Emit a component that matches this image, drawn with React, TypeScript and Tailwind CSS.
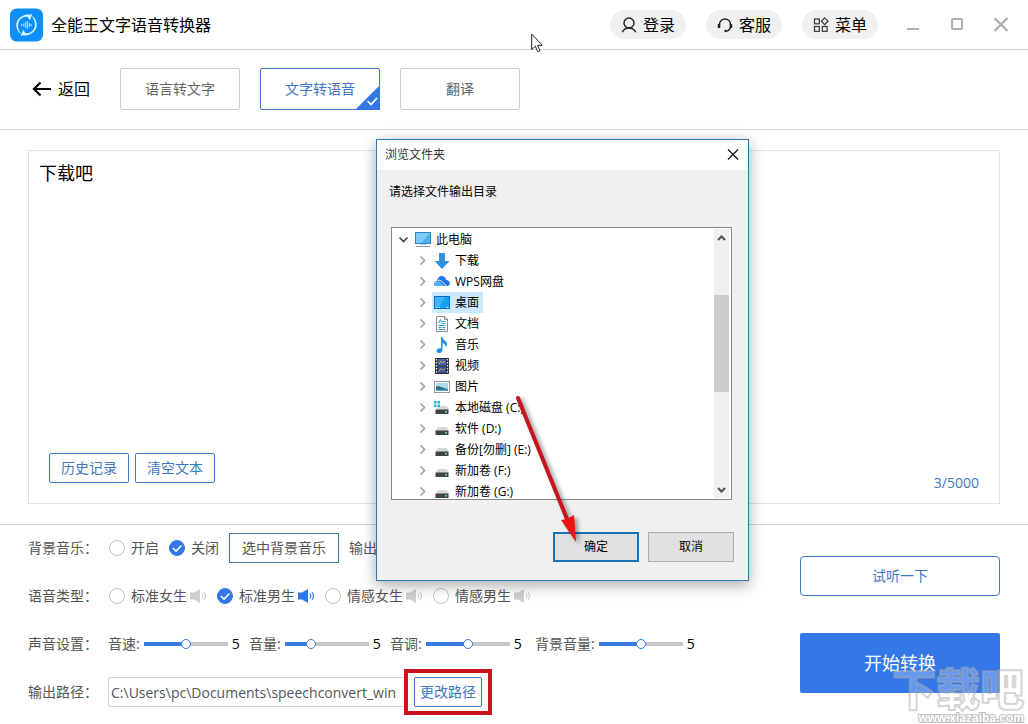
import { useState } from 'react';
import type { ReactNode } from 'react';

interface RadioOptionProps {
  name: string;
  label: string;
  checked: boolean;
  onChange: () => void;
}

interface TreeNode {
  label: string;
  icon: ReactNode;
}

const TABS = ['语言转文字', '文字转语音', '翻译'];
const VOICES = ['标准女生', '标准男生', '情感女生', '情感男生'];

const SLIDERS = [
  { id: 'speed', label: '音速:', value: 50 },
  { id: 'volume', label: '音量:', value: 29 },
  { id: 'pitch', label: '音调:', value: 50 },
  { id: 'bg-volume', label: '背景音量:', value: 50 },
];

/* ---------- icons ---------- */

function LogoIcon() {
  return (
    <svg viewBox="0 0 34 34" className="h-[34px] w-[33px] shrink-0">
      <rect width="34" height="34" rx="7" fill="#0c8ffb" />
      <path
        d="M12 26.500C5 23 4.500 12.500 11.500 8.500 15 6.300 18.500 6 21 6.500L23 5.500 20.500 12 18 8.500C14 8 11 10 9.500 12.500 7 17 8.500 22.500 12 26.500z"
        fill="#d9f6ff"
      />
      <path
        d="M22 7.500C29 11 29.500 21.500 22.500 25.500 19 27.700 15.500 28 13 27.500L11 28.500 13.500 22 16 25.500C20 26 23 24 24.500 21.500 27 17 25.500 11.500 22 7.500z"
        fill="#d9f6ff"
      />
      <path
        d="M12 16v2M14 15.500v3M16 14v6M18 13v8M20 15v4M22 16v2"
        stroke="#8edcff"
        strokeWidth="1.300"
      />
    </svg>
  );
}

function UserIcon() {
  return (
    <svg viewBox="0 0 16 16" className="h-4 w-4" fill="none" stroke="#222" strokeWidth="1.400">
      <circle cx="8" cy="6" r="5" />
      <path d="M1.200 15.300C2.500 12.500 5 11 8 11s5.500 1.500 6.800 4.300" />
    </svg>
  );
}

function HeadsetIcon() {
  return (
    <svg viewBox="0 0 16 16" className="h-4 w-4" fill="none" stroke="#222" strokeWidth="1.400">
      <path d="M2.500 9V7.500a5.500 5.500 0 0 1 11 0V9c0 3-1.500 4.800-4.500 5.200" />
      <path d="M2 7v4M14 7v4" strokeWidth="2.400" />
      <circle cx="8.500" cy="14" r="1.200" fill="#222" stroke="none" />
    </svg>
  );
}

function MenuIcon() {
  return (
    <svg viewBox="0 0 16 16" className="h-4 w-4" fill="none" stroke="#333" strokeWidth="1.200">
      <rect x="1.500" y="2" width="4.800" height="4.800" />
      <rect x="1.500" y="9.500" width="4.800" height="4.800" />
      <rect x="9.300" y="9.500" width="4.800" height="4.800" />
      <path d="M11.700.8 15 4.200l-3.300 3.400-3.300-3.400z" />
    </svg>
  );
}

function SpeakerIcon({ active }: { active: boolean }) {
  return (
    <svg
      viewBox="0 0 18 16"
      className={`h-4 w-[18px] ${active ? 'text-[#2f76e0]' : 'text-[#cfcfcf]'}`}
    >
      <path d="M1 4.500h4L11 1v14l-6-3.500H1z" fill="currentColor" />
      <path
        d="M13 5.500c1 1.500 1 3.500 0 5M15 4c1.800 2.500 1.800 5.500 0 8"
        fill="none"
        stroke="currentColor"
        strokeWidth="1.100"
      />
    </svg>
  );
}

function Chevron({ open }: { open?: boolean }) {
  return (
    <svg viewBox="0 0 16 16" className="h-4 w-4 shrink-0" fill="none" strokeWidth="1.700">
      {open ? (
        <path d="M4.500 5.500l4 4 4-4" stroke="#444" />
      ) : (
        <path d="M6.500 3.500l4 4-4 4" stroke="#a0a0a0" />
      )}
    </svg>
  );
}

function TreeIcon({ children }: { children: ReactNode }) {
  return (
    <svg viewBox="0 0 16 16" className="h-4 w-4 shrink-0">
      {children}
    </svg>
  );
}

const pcIcon = (
  <TreeIcon>
    <rect x=".5" y=".5" width="15" height="11" fill="#4bb2f2" stroke="#2b87c4" />
    <path d="M1 1h14L6 11H1z" fill="#7fcbf7" />
    <path d="M5 12.500h6" stroke="#c3ccd2" />
    <path d="M1 14.500h14" stroke="#8797a3" />
  </TreeIcon>
);

const downloadIcon = (
  <TreeIcon>
    <path d="M5 0h6v8h4.500L8 16 .5 8H5z" fill="#3390dc" />
  </TreeIcon>
);

const cloudIcon = (
  <TreeIcon>
    <path
      d="M1 12C-.5 10 .5 7.500 3 7 3.500 3.500 6 1.500 8.500 2 11 2.500 12 4.500 12 6c3 0 4.500 2.500 3.500 4.500-.5 1-1.500 1.500-2.500 1.500z"
      fill="#2173e8"
    />
    <path d="M.5 10.500C1 7.500 4 6.500 6 8l4.500 4H2c-.8 0-1.500-.8-1.500-1.500z" fill="#55b3f8" />
    <path d="M4 6.500c2-.8 3.500.2 4.500 1.500l4 4" fill="none" stroke="#fff" />
  </TreeIcon>
);

const desktopIcon = (
  <TreeIcon>
    <rect x=".5" y="1.500" width="15" height="12" fill="#18a0f5" stroke="#0a6bb5" />
    <path d="M1 2h10L5 12H1z" fill="#3fb4fa" />
    <path d="M1.500 12.500h2M5 12.500h1M12.500 12.500h2" stroke="#d6f0ff" />
  </TreeIcon>
);

const documentIcon = (
  <TreeIcon>
    <path d="M2.500.5H11L13.500 3v12.500h-11z" fill="#fff" stroke="#8a9196" />
    <path d="M10.500 .5V3.500h3" fill="none" stroke="#8a9196" />
    <path
      d="M4.500 7.500l2-4 1.500 4M8.500 5.500h3M8.500 7.500h3M4.500 9.500h7M4.500 11.500h3M8.500 11.500h3M4.500 13.500h7"
      fill="none"
      stroke="#3b9cc4"
    />
  </TreeIcon>
);

const musicIcon = (
  <TreeIcon>
    <path
      d="M7 0h1.500c.3 3 4.500 4 4.500 7 0 1.500-.8 2.500-1.500 3.500.5-2.500-1-4-3-4.500v7c0 1.800-1.500 3-3.300 3S2.500 15 2.500 13.700c0-1.700 2.500-3 4.500-2.200z"
      fill="#1b93e0"
    />
  </TreeIcon>
);

const videoIcon = (
  <TreeIcon>
    <rect x="1" width="14" height="16" fill="#2e2e33" />
    <path d="M2.500 1v15M13.500 1v15" stroke="#f1f1f1" strokeWidth="1.300" strokeDasharray="1.500 1.500" />
    <rect x="4" y="1" width="8" height="6.500" fill="#4366b4" />
    <rect x="4" y="8.500" width="8" height="6.500" fill="#34559c" />
    <path d="M5 6l2-3 2 2 1.500-2M5 13.500l2-3 2 2 1.500-2" fill="none" stroke="#d9a845" />
  </TreeIcon>
);

const pictureIcon = (
  <TreeIcon>
    <rect x=".5" y="2.500" width="15" height="11" fill="#fff" stroke="#8e9aa3" />
    <rect x="2" y="4" width="12" height="8" fill="#a9d9f5" />
    <path d="M2 7.500c3-1 6 1.500 12 2.500v1H2z" fill="#2b6d76" />
    <path d="M2 10.500h12V12H2z" fill="#4f9ed0" />
  </TreeIcon>
);

const driveIcon = (
  <TreeIcon>
    <path d="M4 6h8.500L15 10H1.500z" fill="#d4d6d7" />
    <rect x="1.500" y="9.500" width="13" height="4.500" fill="#3f4447" />
    <rect x="11" y="11" width="2" height="1.500" fill="#6fe08f" />
  </TreeIcon>
);

const systemDriveIcon = (
  <TreeIcon>
    <path d="M5 6h8L15 10H1.500z" fill="#d4d6d7" />
    <rect x="1.500" y="9.500" width="13" height="4.500" fill="#3f4447" />
    <rect x="11" y="11" width="2" height="1.500" fill="#6fe08f" />
    <path
      d="M0 1h2.500v2.500H0zM3.500 1H6v2.500H3.500zM0 4.500h2.500V7H0zM3.500 4.500H6V7H3.500z"
      fill="#22a7d8"
    />
  </TreeIcon>
);

const TREE: TreeNode[] = [
  { label: '下载', icon: downloadIcon },
  { label: 'WPS网盘', icon: cloudIcon },
  { label: '桌面', icon: desktopIcon },
  { label: '文档', icon: documentIcon },
  { label: '音乐', icon: musicIcon },
  { label: '视频', icon: videoIcon },
  { label: '图片', icon: pictureIcon },
  { label: '本地磁盘 (C:)', icon: systemDriveIcon },
  { label: '软件 (D:)', icon: driveIcon },
  { label: '备份[勿删] (E:)', icon: driveIcon },
  { label: '新加卷 (F:)', icon: driveIcon },
  { label: '新加卷 (G:)', icon: driveIcon },
];

/* ---------- controls ---------- */

function RadioOption({ name, label, checked, onChange }: RadioOptionProps) {
  return (
    <label className="flex items-center gap-1.5">
      <span className="relative flex h-4 w-4">
        <input
          type="radio"
          name={name}
          checked={checked}
          onChange={onChange}
          className="h-4 w-4 appearance-none rounded-full border border-[#c4c4c4] bg-white checked:border-[#3478e5] checked:bg-[#3478e5]"
        />
        {checked && (
          <svg viewBox="0 0 16 16" className="pointer-events-none absolute inset-0 h-4 w-4">
            <path d="M4 8l3 3 5.500-5.500" fill="none" stroke="#fff" strokeWidth="1.600" />
          </svg>
        )}
      </span>
      {label}
    </label>
  );
}

function Slider({ id, label, initial }: { id: string; label: string; initial: number }) {
  const [value, setValue] = useState(initial);

  return (
    <div className="flex items-center gap-1">
      <label htmlFor={id}>{label}</label>
      <input
        id={id}
        type="range"
        value={value}
        onChange={(e) => setValue(Number(e.target.value))}
        className="h-1 w-[84px] appearance-none [&::-webkit-slider-thumb]:h-2.5 [&::-webkit-slider-thumb]:w-2.5 [&::-webkit-slider-thumb]:appearance-none [&::-webkit-slider-thumb]:rounded-full [&::-webkit-slider-thumb]:border [&::-webkit-slider-thumb]:border-[#3478e5] [&::-webkit-slider-thumb]:bg-white"
        style={{
          background: `linear-gradient(to right, #3f7bdc ${value}%, #c6c6c6 ${value}%)`,
        }}
      />
      <output htmlFor={id} className="text-black">
        5
      </output>
    </div>
  );
}

function SettingRow({ title, children }: { title: string; children: ReactNode }) {
  return (
    <div className="flex h-[30px] items-center whitespace-nowrap">
      <span className="w-20 shrink-0">{title}</span>
      {children}
    </div>
  );
}

function Header() {
  const actions = [
    { label: '登录', icon: <UserIcon /> },
    { label: '客服', icon: <HeadsetIcon /> },
    { label: '菜单', icon: <MenuIcon /> },
  ];

  return (
    <header className="flex h-[50px] items-center border-b border-[#d2d2d2] pr-[5px] pl-2.5 text-base text-black">
      <LogoIcon />
      <h1 className="ml-2">全能王文字语音转换器</h1>
      <div className="ml-auto flex gap-5">
        {actions.map((action) => (
          <button
            key={action.label}
            className="flex h-[29px] w-[76px] items-center justify-center gap-1.5 rounded-full bg-[#f0f0f0]"
          >
            {action.icon}
            {action.label}
          </button>
        ))}
      </div>
      <div className="ml-[13px] flex text-[#b0b0b0]">
        <button aria-label="最小化" className="flex h-8 w-11 items-center justify-center">
          <svg viewBox="0 0 16 16" className="h-4 w-4">
            <path d="M2 12h12" stroke="currentColor" strokeWidth="2" />
          </svg>
        </button>
        <button aria-label="最大化" className="flex h-8 w-11 items-center justify-center">
          <svg viewBox="0 0 16 16" className="h-4 w-4">
            <rect x="3" y="2" width="10" height="10" rx="1" fill="none" stroke="currentColor" strokeWidth="2" />
          </svg>
        </button>
        <button aria-label="关闭" className="flex h-8 w-11 items-center justify-center">
          <svg viewBox="0 0 16 16" className="h-4 w-4">
            <path d="M1.500 1l13 13M14.500 1l-13 13" stroke="currentColor" strokeWidth="2.400" />
          </svg>
        </button>
      </div>
    </header>
  );
}

function FolderDialog() {
  const [selected, setSelected] = useState('桌面');

  return (
    <div
      role="dialog"
      aria-label="浏览文件夹"
      className="absolute top-[139px] left-[376px] w-[373px] border border-[#2f78ab] bg-[#f0f0f0] text-xs text-black shadow-[0_4px_14px_rgba(0,0,0,0.35)]"
    >
      <div className="flex h-[30px] items-center justify-between bg-white pl-2">
        <span className="text-[#333]">浏览文件夹</span>
        <button aria-label="关闭" className="flex h-7 w-[30px] items-center justify-center">
          <svg viewBox="0 0 12 12" className="h-3 w-3">
            <path d="M1 .5l10 10M11 .5l-10 10" stroke="#111" strokeWidth="1.200" />
          </svg>
        </button>
      </div>

      <p className="h-[57px] px-3 pt-3 leading-5">请选择文件输出目录</p>

      <div className="mr-4 ml-3.5 flex h-[273px] overflow-hidden border border-[#828790] bg-white p-px">
        <ul className="flex-1 whitespace-nowrap">
          <li className="flex h-[21px] items-center gap-0.5 pl-0.5">
            <Chevron open />
            <span className="flex items-center gap-[5px] px-0.5">
              {pcIcon}
              此电脑
            </span>
          </li>
          {TREE.map((node) => (
            <li key={node.label} className="flex h-[21px] items-center gap-0.5 pl-[21px]">
              <Chevron />
              <button
                onClick={() => setSelected(node.label)}
                className={`flex h-[21px] items-center gap-[5px] pr-1 pl-0.5 ${
                  selected === node.label ? 'bg-[#cce8ff]' : ''
                }`}
              >
                {node.icon}
                {node.label}
              </button>
            </li>
          ))}
        </ul>
        {/* scrollbar */}
        <div className="mr-px flex w-[15px] flex-col bg-[#f0f0f0]">
          <svg viewBox="0 0 15 17" className="h-[17px] w-[15px]" fill="none">
            <path d="M4 11l3.500-3.500L11 11" stroke="#505050" strokeWidth="2" />
          </svg>
          <div className="mt-[49px] h-[97px] bg-[#cdcdcd]" />
          <svg viewBox="0 0 15 17" className="mt-auto h-[17px] w-[15px]" fill="none">
            <path d="M4 7l3.500 3.500L11 7" stroke="#505050" strokeWidth="2" />
          </svg>
        </div>
      </div>

      <div className="flex justify-end gap-[9px] px-3.5 pt-8 pb-[18px]">
        <button className="h-[30px] w-[86px] border-2 border-[#1a73b8] bg-[#e1e1e1]">确定</button>
        <button className="h-[30px] w-[86px] border border-[#adadad] bg-[#e1e1e1]">取消</button>
      </div>
    </div>
  );
}

export default function App() {
  const [activeTab, setActiveTab] = useState('文字转语音');
  const [music, setMusic] = useState('关闭');
  const [voice, setVoice] = useState('标准男生');
  const [text, setText] = useState('下载吧');

  return (
    <div className="relative flex min-h-screen flex-col overflow-hidden bg-white font-['Open_Sans','Noto_Sans_CJK_SC',sans-serif] text-sm text-[#555]">
      <Header />

      <nav className="flex items-center border-b border-[#d8d8d8] pt-[18px] pb-[19px] pl-8">
        <button className="mr-[30px] flex items-center gap-1.5 text-base text-black">
          <svg viewBox="0 0 20 16" className="h-4 w-5" fill="none" stroke="#000" strokeWidth="2.200">
            <path d="M19 8H2M8.500 1.500L2 8l6.500 6.500" />
          </svg>
          返回
        </button>
        <div className="flex gap-5">
          {TABS.map((tab) => (
            <button
              key={tab}
              onClick={() => setActiveTab(tab)}
              className={`relative h-[42px] w-[120px] rounded-xs border ${
                activeTab === tab ? 'border-[#3f77c4] text-[#3f77c4]' : 'border-[#cfcfcf] text-[#666]'
              }`}
            >
              {tab}
              {activeTab === tab && (
                <svg viewBox="0 0 25 25" className="absolute -right-px -bottom-px h-[25px] w-[25px]">
                  <path d="M25 0v25H0z" fill="#3478e5" />
                  <path d="M12.500 16l3.500 3.500 6-6.500" fill="none" stroke="#fff" strokeWidth="1.600" />
                </svg>
              )}
            </button>
          ))}
        </div>
      </nav>

      <main className="mx-7 mt-5 mb-5 flex flex-1 flex-col border border-[#e3e3e3]">
        <textarea
          aria-label="文本内容"
          value={text}
          onChange={(e) => setText(e.target.value)}
          className="flex-1 resize-none px-2.5 py-2 text-lg text-black outline-none"
        />
        <div className="flex items-end justify-between px-5 pb-2.5 text-[#3f77c4]">
          <div className="flex gap-1.5 pb-2.5">
            <button className="h-[30px] w-20 rounded-xs border border-[#3f77c4]">历史记录</button>
            <button className="h-[30px] w-20 rounded-xs border border-[#3f77c4]">清空文本</button>
          </div>
          <span>{text.length}/5000</span>
        </div>
      </main>

      <section className="flex justify-between border-t border-[#d2d2d2] px-7">
        <div className="flex flex-col gap-[18px] pt-2 pb-[17px]">
          <SettingRow title="背景音乐：">
            <div className="flex items-center gap-2.5 pl-px">
              {['开启', '关闭'].map((option) => (
                <RadioOption
                  key={option}
                  name="music"
                  label={option}
                  checked={music === option}
                  onChange={() => setMusic(option)}
                />
              ))}
              <button className="h-[30px] w-[110px] border border-[#44719f]">选中背景音乐</button>
              <span>输出</span>
            </div>
          </SettingRow>

          <SettingRow title="语音类型：">
            <div className="flex pl-px">
              {VOICES.map((option) => (
                <div key={option} className="flex w-[108px] items-center gap-0.5">
                  <RadioOption
                    name="voice"
                    label={option}
                    checked={voice === option}
                    onChange={() => setVoice(option)}
                  />
                  <SpeakerIcon active={voice === option} />
                </div>
              ))}
            </div>
          </SettingRow>

          <SettingRow title="声音设置：">
            <div className="grid grid-cols-[141px_141px_145px_auto]">
              {SLIDERS.map((slider) => (
                <Slider key={slider.id} id={slider.id} label={slider.label} initial={slider.value} />
              ))}
            </div>
          </SettingRow>

          <SettingRow title="输出路径：">
            <input
              aria-label="输出路径"
              readOnly
              value="C:\Users\pc\Documents\speechconvert_win"
              className="h-[30px] w-[298px] rounded-xs border border-[#d0d0d0] px-0.5"
            />
            <div className="relative ml-2">
              <button className="h-[30px] w-[68px] rounded-xs border border-[#3f77c4] text-[#3f77c4]">
                更改路径
              </button>
              <div className="pointer-events-none absolute -inset-x-2.5 -inset-y-2 border-4 border-[#c9151b]" />
            </div>
          </SettingRow>
        </div>

        <div className="flex w-[200px] flex-col gap-[37px] pt-[31px]">
          <button className="h-10 rounded border border-[#3f77c4] text-[#3f77c4]">试听一下</button>
          <button className="h-[60px] rounded-xs bg-[#3478e8] text-lg text-white">开始转换</button>
        </div>
      </section>

      <FolderDialog />

      {/* arrow pointing at the confirm button */}
      <svg
        viewBox="0 0 80 160"
        className="pointer-events-none absolute top-[390px] left-[510px] h-[160px] w-20 drop-shadow-[3px_2px_2px_rgba(0,0,0,0.4)]"
      >
        <path d="M8 8l49 121" stroke="#c4161c" strokeWidth="4" strokeLinecap="round" />
        <path d="M66 152L51 130l6-1 7-4z" fill="#f01010" />
      </svg>

      {/* mouse pointer */}
      <svg viewBox="0 0 12 20" className="pointer-events-none absolute top-[33px] left-[531px] h-5 w-3">
        <path
          d="M.7 1v15.500l3.600-3.400 2.400 5.600 2.300-1-2.400-5.400h4.700z"
          fill="#fff"
          stroke="#222"
        />
      </svg>

      {/* watermark */}
      <div className="pointer-events-none absolute right-1 bottom-0 flex flex-col items-end font-bold">
        <span className="text-[44px] leading-[46px] font-black text-white/25 [-webkit-text-stroke:2px_rgba(170,170,170,0.5)]">
          下载吧
        </span>
        <span className="font-['Liberation_Sans',sans-serif] text-xs leading-3 text-white [-webkit-text-stroke:2px_rgba(175,175,175,0.8)] [paint-order:stroke]">
          www.xiazaiba.com
        </span>
      </div>
    </div>
  );
}
